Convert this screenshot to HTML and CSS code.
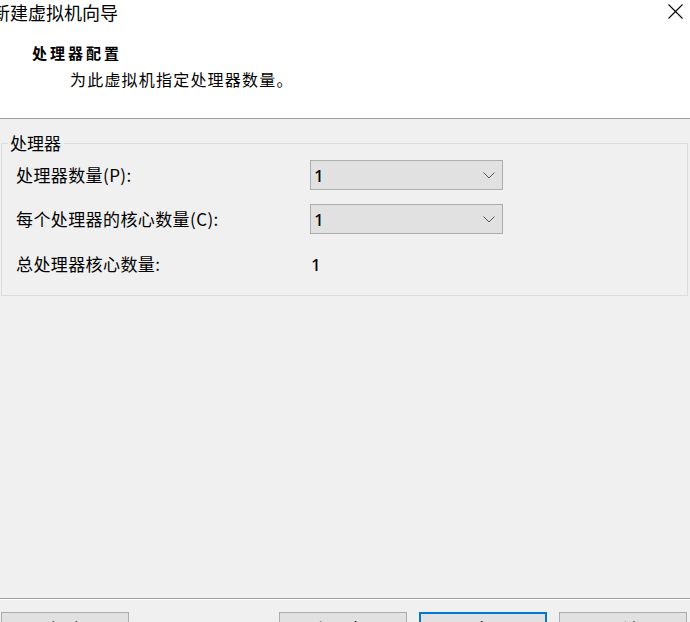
FILE: index.html
```html
<!DOCTYPE html>
<html lang="zh-CN">
<head>
<meta charset="utf-8">
<title>新建虚拟机向导</title>
<link rel="stylesheet" href="styles.css">
</head>
<body>
<header class="header">
  <div class="titlebar">
    <span class="title">新建虚拟机向导</span>
    <span class="close" aria-label="关闭">
      <svg width="15" height="15" viewBox="0 0 15 15"><path d="M0.5 0.5 L14.5 14.5 M14.5 0.5 L0.5 14.5" stroke="#000" stroke-width="1.1" fill="none"/></svg>
    </span>
  </div>
  <div class="intro">
    <h1 class="heading">处理器配置</h1>
    <p class="subtitle">为此虚拟机指定处理器数量。</p>
  </div>
</header>
<main class="main">
  <fieldset class="group">
    <legend class="legend">处理器</legend>
    <div class="grid">
      <span class="label">处理器数量(P):</span>
      <div class="select"><span class="value">1</span><svg class="chev" width="12" height="7" viewBox="0 0 12 7"><path d="M0.5 0.5 L6 6 L11.5 0.5" stroke="#555" stroke-width="1" fill="none"/></svg></div>
      <span class="label">每个处理器的核心数量(C):</span>
      <div class="select"><span class="value">1</span><svg class="chev" width="12" height="7" viewBox="0 0 12 7"><path d="M0.5 0.5 L6 6 L11.5 0.5" stroke="#555" stroke-width="1" fill="none"/></svg></div>
      <span class="label">总处理器核心数量:</span>
      <span class="total">1</span>
    </div>
  </fieldset>
</main>
<footer class="footer">
  <button class="btn">帮助</button>
  <div class="spacer"></div>
  <button class="btn">&lt; 上一步(B)</button>
  <button class="btn primary">下一步(N) &gt;</button>
  <button class="btn">取消</button>
</footer>
</body>
</html>
```
FILE: styles.css
```css
html, body {
  margin: 0;
  padding: 0;
  overflow: hidden;
  height: 622px;
}
body {
  background: #f0f0f0;
  font-family: "Noto Sans CJK SC", "Noto Sans", sans-serif;
  color: #000;
  font-size: 17px;
}
.header {
  height: 118px;
  background: #fff;
  border-bottom: 1px solid #a0a0a0;
}
.titlebar {
  display: flex;
  justify-content: space-between;
  align-items: flex-start;
  height: 24px;
  padding-right: 7px;
}
.title {
  margin-left: -8px;
  font-size: 18px;
  line-height: 24px;
}
.close {
  margin-top: 4px;
  width: 15px;
  height: 15px;
  display: block;
}
.close svg { display: block; }
.heading {
  margin: 19px 0 0 32px;
  font-size: 15px;
  line-height: 20px;
  font-weight: bold;
  letter-spacing: 3px;
}
.subtitle {
  margin: 5px 0 0 70px;
  font-size: 16px;
  line-height: 22px;
  letter-spacing: 1.2px;
}
.main {
  height: 479px;
  padding-top: 15px;
  box-sizing: border-box;
}
.group {
  margin: 0 2px 0 1px;
  padding: 8px 0 17px 0;
  border: 1px solid #dcdcdc;
  min-width: 0;
}
.legend {
  margin-left: 6px;
  padding: 0 3px 0 2px;
  font-size: 17px;
  line-height: 18px;
}
.grid {
  display: grid;
  grid-template-columns: 294px 193px;
  grid-auto-rows: 30px;
  row-gap: 14px;
  align-items: center;
  padding-left: 14px;
}
.grid > :nth-child(5), .grid > :nth-child(6) { margin-top: 2px; }
.label {
  font-size: 17px;
  letter-spacing: 0.4px;
  line-height: 30px;
}
.select {
  box-sizing: border-box;
  height: 30px;
  border: 1px solid #adadad;
  background: #e1e1e1;
  display: flex;
  align-items: center;
  justify-content: space-between;
  padding: 0 7px 0 3px;
}
.value, .total {
  font-family: "Noto Sans", sans-serif;
  font-size: 17px;
  font-weight: 500;
}
.total { padding-left: 1px; }
.chev { display: block; margin-top: 1px; }
.footer {
  border-top: 1px solid #a0a0a0;
  box-shadow: inset 0 1px #fff;
  display: flex;
  gap: 12px;
  padding: 13px 3px 0 1px;
}
.spacer { flex: 1; }
.btn {
  box-sizing: border-box;
  width: 128px;
  height: 30px;
  border: 1px solid #adadad;
  background: #e1e1e1;
  font-family: "Noto Sans CJK SC", "Noto Sans", sans-serif;
  font-size: 17px;
  line-height: 24px;
  padding: 4px 0 0 0;
  margin: 0;
  color: #000;
  display: flex;
  justify-content: center;
  align-items: flex-start;
}
.primary {
  border: 2px solid #0078d7;
  padding-top: 3px;
}
```
